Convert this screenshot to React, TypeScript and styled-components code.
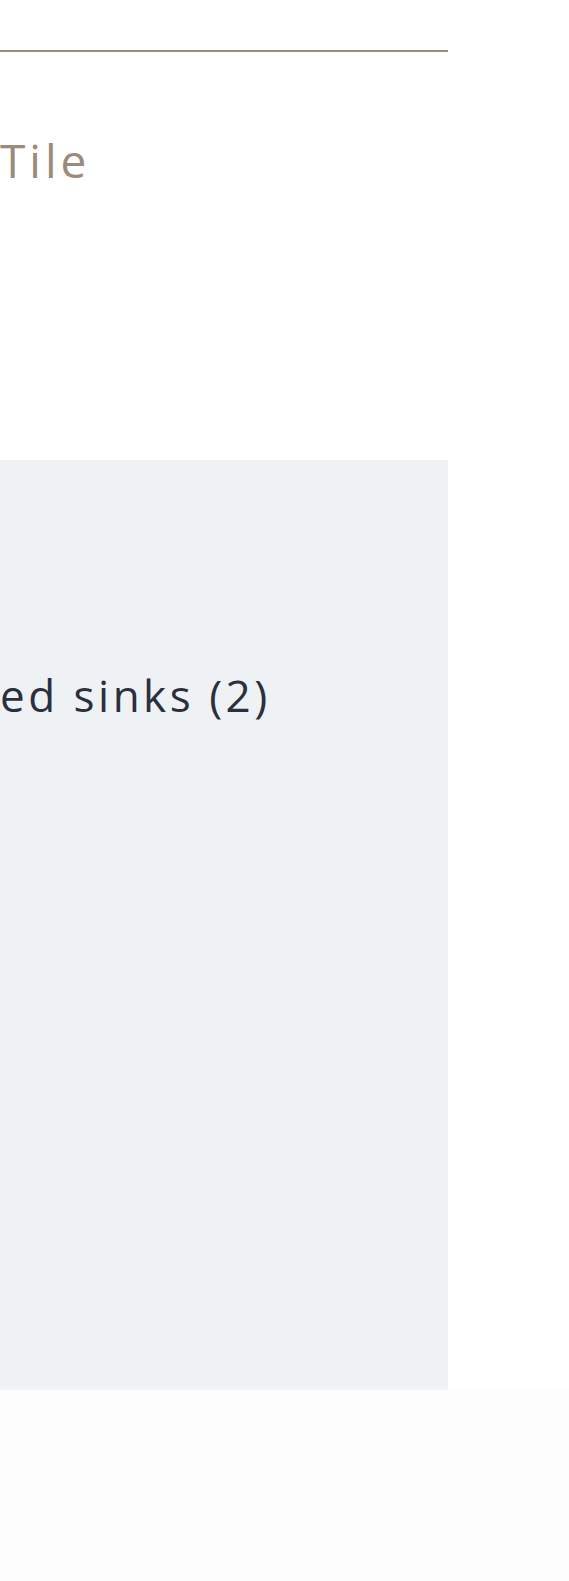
import React from "react";
import styled, { createGlobalStyle } from "styled-components";

const GlobalStyle = createGlobalStyle`
  html, body {
    margin: 0;
    padding: 0;
    background: #fdfdfd;
  }
  body {
    font-family: "Open Sans", "Liberation Sans", sans-serif;
  }
`;

const Page = styled.div`
  width: 569px;
  min-height: 1581px;
  background: #fdfdfd;
  display: flex;
  flex-direction: column;
  overflow: hidden;
`;

const Top = styled.section`
  width: 569px;
  background: #ffffff;
  padding-top: 50px;
  display: flex;
  flex-direction: column;
`;

const Rule = styled.hr`
  width: 448px;
  height: 2px;
  margin: 0;
  border: 0;
  background: #9b8b7a;
`;

const SectionTitle = styled.h2`
  margin: 85px 0 0;
  font-family: "Open Sans", sans-serif;
  font-weight: 400;
  font-size: 46px;
  line-height: 46px;
  letter-spacing: 4px;
  color: #9b8b7a;
  white-space: nowrap;
`;

const Spacer = styled.div`
  height: 277px;
`;

const PanelRow = styled.div`
  display: flex;
  background: #ffffff;
`;

const Panel = styled.div`
  width: 448px;
  height: 713px;
  padding-top: 213px;
  background: #eff2f4;
  border-bottom: 4px solid #f2f4f6;
`;

const Category = styled.h3`
  margin: 0;
  font-family: "Open Sans", sans-serif;
  font-weight: 400;
  font-size: 44px;
  line-height: 44px;
  letter-spacing: 3.5px;
  color: #2b2f3e;
  white-space: nowrap;
`;

export default function App() {
  return (
    <>
      <GlobalStyle />
      <Page>
        <Top>
          <Rule />
          <SectionTitle>Tile</SectionTitle>
          <Spacer />
        </Top>
        <PanelRow>
          <Panel>
            <Category>ed sinks (2)</Category>
          </Panel>
        </PanelRow>
      </Page>
    </>
  );
}
